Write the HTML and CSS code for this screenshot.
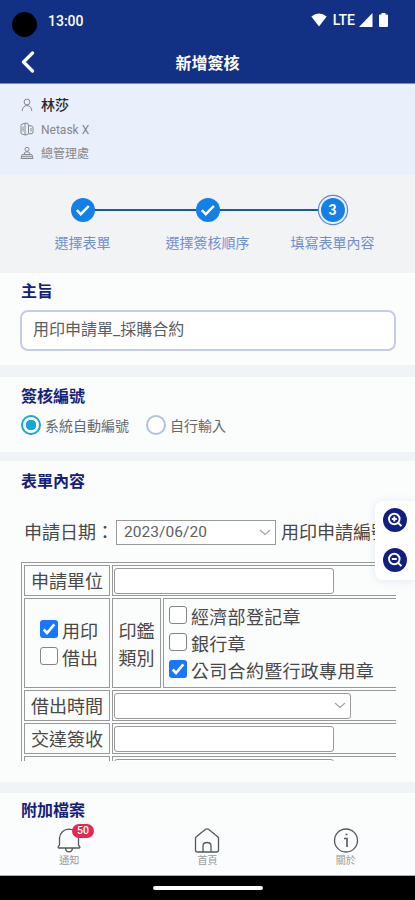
FILE: index.html
```html
<!DOCTYPE html>
<html lang="zh-Hant">
<head>
<meta charset="utf-8">
<meta name="viewport" content="width=device-width, initial-scale=1">
<title>新增簽核</title>
<link rel="stylesheet" href="styles.css">
</head>
<body>
<div class="phone">
  <div class="status">
    <span class="camera"></span>
    <span class="clock">13:00</span>
    <svg class="wifi" width="16" height="14" viewBox="0 0 16 14"><path d="M0.3 3.6Q8-2.8 15.700 3.600L8 13.500Z" fill="#fff"/></svg>
    <span class="lte">LTE</span>
    <svg class="signal" width="14" height="14" viewBox="0 0 14 14"><path d="M13.500 0V14H0Z" fill="#fff"/></svg>
    <svg class="battery" width="9" height="14" viewBox="0 0 9 14"><path d="M2.500 0h4v1.500H8q1 0 1 1V13q0 1-1 1H1q-1 0-1-1V2.500q0-1 1-1h1.500z" fill="#fff"/></svg>
  </div>
  <header class="header">
    <svg class="back" width="14" height="22" viewBox="0 0 14 22"><path d="M11.500 2 2.500 11l9 9" fill="none" stroke="#fff" stroke-width="3.200" stroke-linecap="round" stroke-linejoin="round"/></svg>
    <h1 class="title">新增簽核</h1>
  </header>

  <section class="user">
    <div class="user-row name">
      <svg width="14" height="14" viewBox="0 0 14 14"><circle cx="7" cy="4" r="2.900"/><path d="M2.200 13Q2.400 8 7 7.500q4.600.5 4.800 5.500"/></svg>
      <span>林莎</span>
    </div>
    <div class="user-row company">
      <svg width="14" height="14" viewBox="0 0 14 14"><path d="M1 11V3.500Q1 2.500 2 2.200L5 1.200V13L2 12Q1 11.800 1 11zM5 1.200Q8.500.5 8.500 3V11q0 2-3.500 2M3 4.500v5M8.500 3.800h2.500q2 .2 2 2v4q0 2-2 2H8.500M11 6v3.500"/></svg>
      <span>Netask X</span>
    </div>
    <div class="user-row dept">
      <svg width="14" height="14" viewBox="0 0 14 14"><circle cx="7" cy="3.300" r="2"/><path d="M4 8.500q0-2.800 3-2.800t3 2.800zM2 8.700h10l1 3.800H1zM2 10.700h10"/></svg>
      <span>總管理處</span>
    </div>
  </section>

  <ol class="steps">
    <li class="step">
      <span class="dot"><svg width="24" height="24" viewBox="0 0 24 24"><path d="m5.800 12.200 4 4 8-8.200"/></svg></span>
      <span class="step-label">選擇表單</span>
    </li>
    <li class="step">
      <span class="dot"><svg width="24" height="24" viewBox="0 0 24 24"><path d="m5.800 12.200 4 4 8-8.200"/></svg></span>
      <span class="step-label">選擇簽核順序</span>
    </li>
    <li class="step">
      <span class="dot current">3</span>
      <span class="step-label">填寫表單內容</span>
    </li>
  </ol>

  <main class="content">
    <section class="card subject">
      <h2>主旨</h2>
      <div class="input">用印申請單_採購合約</div>
    </section>

    <section class="card number">
      <h2>簽核編號</h2>
      <div class="radios">
        <span class="radio on"></span><span class="radio-label">系統自動編號</span>
        <span class="radio"></span><span class="radio-label">自行輸入</span>
      </div>
    </section>

    <section class="card form">
      <h2>表單內容</h2>
      <div class="sheet">
        <div class="date-row">
          <span>申請日期：</span>
          <span class="select date">2023/06/20<svg width="12" height="7" viewBox="0 0 12 7"><path d="m1 1 5 4.500L11 1"/></svg></span>
          <span>用印申請編號</span>
        </div>
        <table>
          <colgroup><col class="c1"><col class="c2"><col class="c3"></colgroup>
          <tr class="line"><td class="head">申請單位</td><td colspan="2"><span class="field"></span></td></tr>
          <tr class="tall">
            <td>
              <div class="check use"><span class="box on"><svg width="18" height="18" viewBox="0 0 18 18"><path d="m3.700 9.500 3.300 3.500 7.300-8.700"/></svg></span>用印</div>
              <div class="check use"><span class="box"></span>借出</div>
            </td>
            <td class="kind">印鑑<br>類別</td>
            <td>
              <div class="check"><span class="box"></span>經濟部登記章</div>
              <div class="check"><span class="box"></span>銀行章</div>
              <div class="check"><span class="box on"><svg width="18" height="18" viewBox="0 0 18 18"><path d="m3.700 9.500 3.300 3.500 7.300-8.700"/></svg></span>公司合約暨行政專用章</div>
            </td>
          </tr>
          <tr class="line"><td class="head">借出時間</td><td colspan="2"><span class="field select long"><svg width="12" height="7" viewBox="0 0 12 7"><path d="m1 1 5 4.500L11 1"/></svg></span></td></tr>
          <tr class="line"><td class="head">交達簽收</td><td colspan="2"><span class="field"></span></td></tr>
          <tr class="line"><td></td><td colspan="2"><span class="field"></span></td></tr>
        </table>
      </div>
      <div class="zoom">
        <svg width="24" height="24" viewBox="0 0 24 24"><circle class="disc" cx="12" cy="12" r="12"/><circle cx="11.300" cy="11" r="5.300"/><path d="m15.300 15 3.200 3.200M8.800 11h5M11.300 8.500v5"/></svg>
        <svg width="24" height="24" viewBox="0 0 24 24"><circle class="disc" cx="12" cy="12" r="12"/><circle cx="11.300" cy="11" r="5.300"/><path d="m15.300 15 3.200 3.200M8.800 11h5"/></svg>
      </div>
    </section>

    <section class="card files"><h2>附加檔案</h2></section>
  </main>

  <nav class="nav">
    <div class="tab">
      <svg width="26" height="26" viewBox="0 0 26 26"><path d="M3.500 18Q1 20.800 3 21h20q2-.2-.5-3V11Q21 2.500 13 2.200 5 2.500 3.500 11zM9.500 21.300q.5 3.400 3.500 3.500 3-.1 3.500-3.500"/></svg>
      <span class="badge">50</span>
      <span>通知</span>
    </div>
    <div class="tab">
      <svg width="26" height="26" viewBox="0 0 26 26"><path d="M1.500 11.800Q1.500 10.500 2.300 9.800L11.500 2.300q1.500-1 3 0l9.200 7.500q.8.700.8 2V23q0 2-2 2h-19q-2 0-2-2zM9 25v-6q0-3.500 4-3.500t4 3.500v6"/></svg>
      <span>首頁</span>
    </div>
    <div class="tab">
      <svg width="26" height="26" viewBox="0 0 26 26"><circle cx="13" cy="13.500" r="11.500"/><path d="M11 11.500h3V20M12.500 7.500h2" stroke-width="1.600"/></svg>
      <span>關於</span>
    </div>
  </nav>
  <div class="gesture"><span></span></div>
</div>
</body>
</html>
```
FILE: styles.css
```css
* { box-sizing: border-box; }
body {
  margin: 0;
  font-family: Roboto, "Noto Sans CJK TC", sans-serif;
  background: #000;
}
.phone {
  width: 415px;
  height: 900px;
  display: flex;
  flex-direction: column;
  overflow: hidden;
  background: #f1f4f6;
}
svg { display: block; flex: none; }

.status {
  height: 40px;
  flex: none;
  display: flex;
  align-items: center;
  padding: 0 27px 0 12px;
  background: #123184;
  color: #fff;
}
.camera { width: 25px; height: 25px; border-radius: 50%; background: #000; margin-top: 9px; }
.clock { font-size: 14px; font-weight: 500; margin: 1px 0 0 11px; flex: 1; }
.lte { font-size: 14px; font-weight: 500; margin: 0 4px 0 6px; }
.battery { margin-left: 6px; }

.header {
  height: 44px;
  flex: none;
  display: grid;
  grid-template-columns: 40px 1fr 40px;
  align-items: center;
  background: #123184;
  border-bottom: 1px solid #7c8bc0;
  color: #fff;
}
.back { margin-left: 21px; }
.title { margin: 0; text-align: center; font-size: 16px; font-weight: 700; }

.user {
  height: 91px;
  flex: none;
  padding: 9px 20px;
  background: #e9effb;
}
.user-row { height: 24px; display: flex; align-items: center; gap: 7px; font-size: 12px; color: #85878d; }
.user-row svg { fill: none; stroke: #85888f; stroke-width: 1; }
.user-row.name { font-size: 14px; font-weight: 500; color: #25282e; }
.name span, .dept span { margin-top: -2px; }
.company span { margin-top: 2px; }

.steps {
  height: 98px;
  flex: none;
  margin: 0;
  padding: 20px 20px 0;
  list-style: none;
  display: grid;
  grid-template-columns: repeat(3, 125px);
  background: #f1f3f5;
}
.step { display: grid; justify-items: center; align-content: start; gap: 5px; }
.step > * { grid-column: 1; }
.step::before {
  content: "";
  grid-area: 1 / 1;
  align-self: center;
  width: 125px;
  height: 2px;
  background: #1556b4;
}
.step:first-child::before { width: 62px; justify-self: end; }
.step:last-child::before { width: 62px; justify-self: start; }
.dot {
  grid-row: 1;
  width: 24px;
  height: 24px;
  margin: 3px;
  border-radius: 50%;
  background: #137fe8;
  color: #fff;
  font-size: 14px;
  font-weight: 700;
  line-height: 24px;
  text-align: center;
}
.dot svg { fill: none; stroke: #fff; stroke-width: 2.500; }
.dot.current { box-shadow: 0 0 0 2px #eef4ff, 0 0 0 3.200px #5c86d8; }
.step-label { font-size: 14px; line-height: 24px; color: #6f8fd0; white-space: nowrap; padding-top: 1px; }

.content { flex: 1; min-height: 0; overflow: hidden; display: flex; flex-direction: column; }
.card { position: relative; flex: none; padding: 0 20px; background: #fbfcfc; }
h2 { margin: 0; padding-left: 1px; font-size: 16px; line-height: 24px; font-weight: 700; color: #14207c; }
.subject { height: 92px; padding-top: 7px; }
.input {
  height: 41px;
  margin: 6px -1px 0 0;
  padding-left: 11px;
  border: 2px solid #c5cce6;
  border-radius: 8px;
  background: #fff;
  font-size: 16px;
  line-height: 36px;
  color: #5a5d61;
}
.number { height: 75px; margin-top: 12px; padding-top: 8px; }
.radios { display: flex; align-items: center; height: 24px; margin-top: 4px; }
.radio { width: 20px; height: 20px; border: 2px solid #b3c0dd; border-radius: 50%; background: #fff; margin-left: 1px; }
.radio.on { border-color: #18a6d2; background: radial-gradient(circle, #18a6d2 5px, #fff 5.500px); }
.radio-label { margin: -1px 16px 0 4px; font-size: 14px; color: #65686c; }

.form { height: 321px; margin-top: 9px; padding-top: 9px; }
.sheet { height: 244px; margin: 23px -1px 0 1px; width: 375px; overflow: hidden; color: #484848; font-size: 18px; }
.date-row { display: flex; align-items: center; height: 30px; padding-left: 3px; margin-bottom: 15px; white-space: nowrap; }
.date-row > span:not(.date) { margin-top: -2px; }
.select svg { fill: none; stroke: #a3a3a3; stroke-width: 1.200; }
.date {
  width: 160px;
  height: 25px;
  flex: none;
  margin: 0 5px 0 2px;
  padding: 0 4px 0 7px;
  display: flex;
  align-items: center;
  justify-content: space-between;
  border: 1px solid #999;
  background: #fff;
  font-size: 15.500px;
  letter-spacing: .05px;
  color: #606060;
}
table {
  table-layout: fixed;
  width: 520px;
  border: 1px solid #999;
  border-collapse: separate;
  border-spacing: 2px;
}
.c1 { width: 86px; }
.c2 { width: 49px; }
td { padding: 0; border: 1px solid #999; line-height: 27px; vertical-align: middle; }
.line { height: 31px; }
.tall { height: 90px; }
.head, .kind { text-align: center; }
.head { padding-top: 2px; line-height: 26px; }
.kind { padding-top: 3px; }
.field { display: block; width: 220px; height: 26px; margin: 1px 0 1px 1px; border: 1px solid #999; border-radius: 3px; background: #fff; }
.long { width: 237px; display: flex; align-items: center; justify-content: flex-end; padding-right: 4px; }
.check { display: flex; height: 27px; align-items: center; padding: 2px 0 0 5px; gap: 4px; letter-spacing: .3px; }
.use { padding: 4px 0 0 15px; letter-spacing: 0; }
.box { width: 18px; height: 18px; flex: none; margin-top: -5px; border: 1px solid #858585; border-radius: 3px; background: #fff; }
.box.on { border: 0; background: #1976ff; }
.box svg { fill: none; stroke: #fff; stroke-width: 2.600; }

.zoom {
  position: absolute;
  top: 40px;
  right: 0;
  width: 40px;
  height: 79px;
  padding: 7px 0 0 8px;
  display: grid;
  align-content: start;
  gap: 16px;
  border-radius: 8px 0 0 8px;
  background: #fff;
  box-shadow: 0 1px 9px rgba(80, 120, 160, .15);
}
.zoom svg { fill: none; stroke: #fff; stroke-width: 1.900; }
.zoom .disc { fill: #101f80; stroke: none; }
.files { height: 60px; margin-top: 11px; padding-top: 6px; }

.nav {
  height: 51px;
  flex: none;
  display: grid;
  grid-template-columns: repeat(3, 1fr);
  background: #fafcfd;
  border-bottom: 1px solid #aaa;
}
.tab { position: relative; display: flex; flex-direction: column; align-items: center; font-size: 10px; line-height: 12px; color: #9a9a9a; }
.tab svg { width: 26px; height: 26px; margin: 2px 0 2px; fill: none; stroke: #55585a; stroke-width: 1.300; }
.badge {
  position: absolute;
  left: 72px;
  top: -1px;
  width: 22px;
  height: 14px;
  border-radius: 7px;
  background: #e32853;
  color: #fff;
  font-size: 10.500px;
  font-weight: 500;
  line-height: 14px;
  text-align: center;
}
.gesture { height: 24px; flex: none; display: flex; justify-content: center; background: #000; }
.gesture span { width: 110px; height: 4px; margin-top: 10px; border-radius: 2px; background: #fff; }
```
